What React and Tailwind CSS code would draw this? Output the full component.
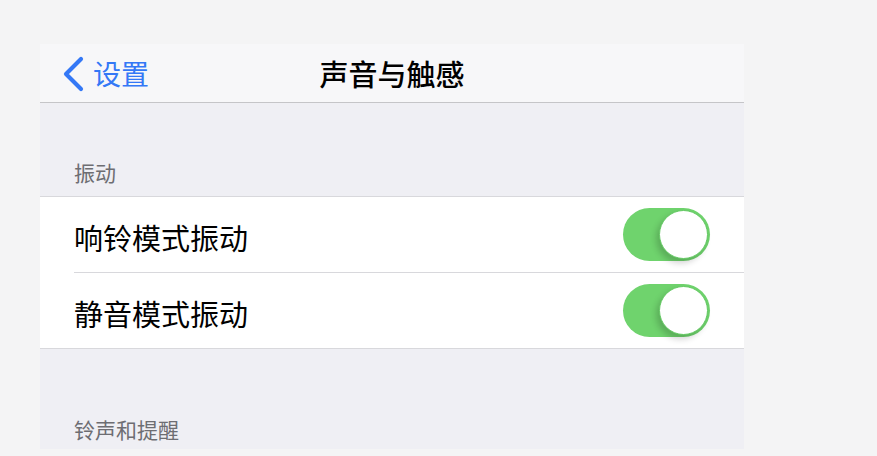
const FONT = { fontFamily: '"Noto Sans CJK SC", "Noto Sans", sans-serif' };

function Toggle() {
  return (
    <div className="relative w-[87px] h-[53px] rounded-full bg-[#6fd36d]">
      <div className="absolute right-[2px] top-[2px] w-[49px] h-[49px] rounded-full bg-white border-[1.5px] border-[#63c962] shadow-[-3px_4px_6px_rgba(0,0,0,0.18)]" />
    </div>
  );
}

export default function App() {
  return (
    <div className="w-full h-[456px] bg-[#f4f4f5] pt-[44px] pl-[40px] overflow-hidden" style={FONT}>
      <div className="w-[704px]">
        {/* nav */}
        <div className="relative h-[59px] bg-[#f7f7f9] border-b border-[#c5c5c8] flex items-center">
          <div className="flex items-center pl-[21px] text-[#3478f6]">
            <svg width="24" height="36" viewBox="0 0 24 36" className="mt-[1px]">
              <polyline points="20,3 5,18 20,33" fill="none" stroke="#3478f6" strokeWidth="4.2" strokeLinecap="round" strokeLinejoin="round" />
            </svg>
            <span className="ml-[8px] text-[28px] leading-[34px]">设置</span>
          </div>
          <div className="absolute inset-0 flex items-center justify-center">
            <span className="text-[29px] leading-[34px] font-medium text-black">声音与触感</span>
          </div>
        </div>

        {/* header */}
        <div className="h-[93px] bg-[#efeff4] flex items-end pl-[34px] pb-[11px]">
          <span className="text-[21px] leading-[25px] text-[#6d6d72]">振动</span>
        </div>

        <div className="border-t border-b border-[#d8d8dc] bg-white">
          <div className="flex items-center justify-between h-[76px] pr-[34px] ml-[34px] border-b border-[#d8d8dc]">
            <span className="text-[29px] leading-[34px] text-black mt-[5px]">响铃模式振动</span>
            <Toggle />
          </div>
          <div className="flex items-center justify-between h-[75px] pr-[34px] ml-[34px]">
            <span className="text-[29px] leading-[34px] text-black mt-[5px]">静音模式振动</span>
            <Toggle />
          </div>
        </div>

        <div className="h-[100px] bg-[#efeff4] flex items-end pl-[34px] pb-[7px]">
          <span className="text-[21px] leading-[25px] text-[#6d6d72]">铃声和提醒</span>
        </div>
      </div>
    </div>
  );
}
